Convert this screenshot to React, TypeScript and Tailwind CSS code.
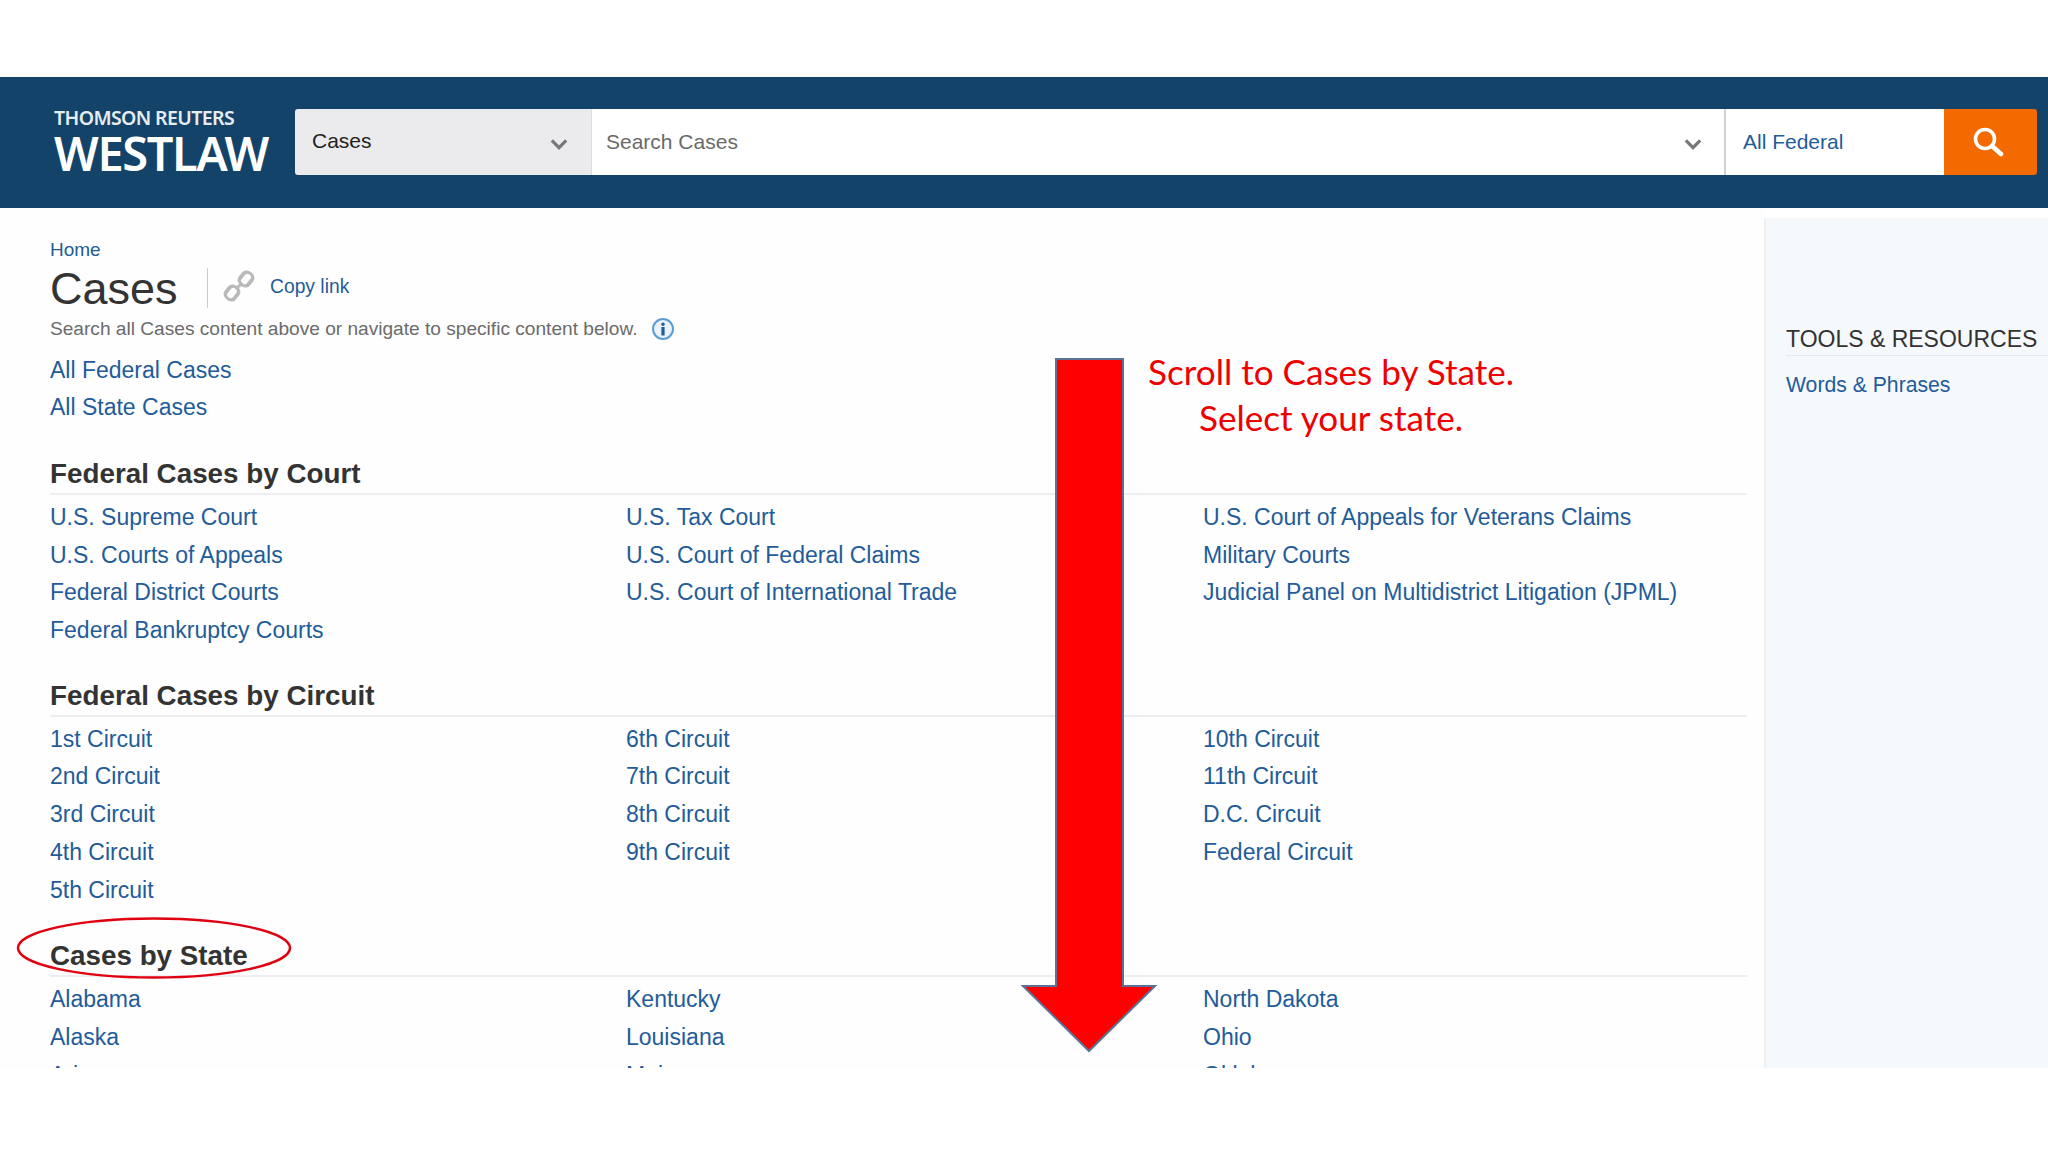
const courtRows = [
  ["U.S. Supreme Court", "U.S. Tax Court", "U.S. Court of Appeals for Veterans Claims"],
  ["U.S. Courts of Appeals", "U.S. Court of Federal Claims", "Military Courts"],
  ["Federal District Courts", "U.S. Court of International Trade", "Judicial Panel on Multidistrict Litigation (JPML)"],
  ["Federal Bankruptcy Courts", "", ""],
];

const circuitRows = [
  ["1st Circuit", "6th Circuit", "10th Circuit"],
  ["2nd Circuit", "7th Circuit", "11th Circuit"],
  ["3rd Circuit", "8th Circuit", "D.C. Circuit"],
  ["4th Circuit", "9th Circuit", "Federal Circuit"],
  ["5th Circuit", "", ""],
];

const stateRows = [
  ["Alabama", "Kentucky", "North Dakota"],
  ["Alaska", "Louisiana", "Ohio"],
  ["Arizona", "Maine", "Oklahoma"],
];

function Section({ title, rows }: { title: string; rows: string[][] }) {
  return (
    <section className="mr-[17px]">
      <h2 className="h-[38px] text-[27.8px] leading-[38px] font-bold text-[#333333]">{title}</h2>
      <div className="h-0.5 bg-[#eeeef0] mb-[3px]" />
      {rows.map((row, i) => (
        <div key={i} className="grid grid-cols-[576px_577px_1fr] h-[37.7px] items-center text-[23px] leading-[38px] text-[#1f5c99] whitespace-nowrap">
          {row.map((cell, j) => (
            <a key={j}>{cell}</a>
          ))}
        </div>
      ))}
    </section>
  );
}

function Chevron({ className }: { className: string }) {
  return (
    <svg viewBox="0 0 20 12" className={className} fill="none" stroke="#77787b" strokeWidth="3.6">
      <path d="M2 2l8 8 8-8" />
    </svg>
  );
}

export default function App() {
  return (
    <div className="relative h-[1152px] w-[2048px] overflow-hidden bg-white font-['Liberation_Sans',Arial,sans-serif]">
      <div className="h-[77px]" />

      {/* HEADER */}
      <header className="h-[131px] bg-[#134369] flex items-center pl-[54px] pr-[11px] pb-px">
        <div className="w-[241px] -mt-[2px] text-white font-['Noto_Sans',sans-serif] font-semibold">
          <div className="text-[19.5px] leading-[22px] tracking-[-0.6px] opacity-90">THOMSON REUTERS</div>
          <div className="text-[47px] leading-[46px] tracking-[-1.4px] mt-px">WESTLAW</div>
        </div>
        <div className="flex-1 h-[66px] flex rounded-[3px] overflow-hidden">
          <div className="w-[296px] bg-[#ebebed] flex items-center justify-between pl-[17px] pr-[23px] text-[21px] text-[#222222]">
            <span className="-mt-[3px]">Cases</span>
            <Chevron className="w-[18px] h-[12px] mt-[3px]" />
          </div>
          <div className="flex-1 bg-white border-l border-[#dddddd] flex items-center justify-between pl-[14px] pr-[22px] text-[21px] text-[#6a6a6a]">
            <span>Search Cases</span>
            <Chevron className="w-[18px] h-[12px] mt-[3px]" />
          </div>
          <div className="w-[220px] bg-white border-l-2 border-[#cfd3d6] flex items-center pl-[17px] text-[21px] text-[#1f5c99]">
            All Federal
          </div>
          <div className="w-[93px] bg-[#f26a00] flex items-center justify-center">
            <svg viewBox="0 0 32 32" className="w-[32px] h-[32px] -ml-[6px]" fill="none" stroke="#ffffff">
              <circle cx="13" cy="13" r="9.5" strokeWidth="3.6" />
              <path d="M20 20l9 8" strokeWidth="4.6" strokeLinecap="round" />
            </svg>
          </div>
        </div>
      </header>

      {/* BODY */}
      <div className="h-[860px] flex overflow-hidden">
        <main className="w-[1764px] pl-[50px] bg-[#fefefe]">
          <div className="text-[19px] leading-[24px] text-[#1f5c99] mt-[30px]">Home</div>
          <div className="flex items-center h-[52px] mt-px">
            <h1 className="w-[157px] text-[45px] leading-[52px] text-[#333333]">Cases</h1>
            <div className="w-px h-[40px] bg-[#cccccc] -mt-[3px]" />
            <svg viewBox="0 0 34 34" className="w-[34px] h-[34px] ml-[14px] -mt-[6px]" fill="none" stroke="#b9b9b9" strokeWidth="3">
              <rect x="-7" y="-4" width="14" height="8" rx="4" transform="translate(24 10) rotate(-50) scale(1 1.3)" />
              <rect x="-7" y="-4" width="14" height="8" rx="4" transform="translate(10 24) rotate(-50) scale(1 1.3)" />
              <path d="M14 20l6-6" />
            </svg>
            <a className="ml-[14px] text-[19.3px] text-[#1f5c99] -mt-[3px]">Copy link</a>
          </div>
          <div className="flex items-center h-[24px] mt-[2px] text-[19.13px] text-[#6b6b6b]">
            <span>Search all Cases content above or navigate to specific content below.</span>
            <svg viewBox="0 0 24 24" className="w-[24px] h-[24px] ml-[14px]">
              <circle cx="12" cy="12" r="10" fill="#eaf3fb" stroke="#5b9bd5" strokeWidth="2" />
              <circle cx="12" cy="7.2" r="1.7" fill="#1f5c99" />
              <rect x="10.4" y="10" width="3.2" height="8.5" fill="#1f5c99" />
            </svg>
          </div>
          <div className="mt-[11px] h-[37px] text-[23px] leading-[37px] text-[#1f5c99]">All Federal Cases</div>
          <div className="h-[37px] text-[23px] leading-[37px] text-[#1f5c99]">All State Cases</div>

          <div className="mt-[29px]"><Section title="Federal Cases by Court" rows={courtRows} /></div>
          <div className="mt-[28px]"><Section title="Federal Cases by Circuit" rows={circuitRows} /></div>
          <div className="mt-[29px]"><Section title="Cases by State" rows={stateRows} /></div>
        </main>

        <aside className="flex-1 mt-[10px] bg-[#f6f9fb] border-l-2 border-[#eef0f2] pl-[20px] overflow-hidden">
          <h3 className="mt-[106px] text-[23px] leading-[30px] text-[#333333] whitespace-nowrap">TOOLS &amp; RESOURCES</h3>
          <div className="h-px bg-[#e6e8ea] mt-[1px]" />
          <a className="block mt-[14px] text-[21.2px] leading-[30px] text-[#1f5c99]">Words &amp; Phrases</a>
        </aside>
      </div>

      {/* ANOTASI MERAH */}
      <div className="absolute left-[1101px] top-[348px] w-[460px] text-center font-['Lato',sans-serif] text-[35.1px] leading-[46px] text-[#ee0000]">
        <div>Scroll to Cases by State.</div>
        <div>Select your state.</div>
      </div>
      <svg className="absolute left-0 top-0 pointer-events-none" width="2048" height="1152">
        <path d="M1056 359H1123V986H1155L1089 1051L1023 986H1056Z" fill="#ff0000" stroke="#5b7294" strokeWidth="2" />
        <ellipse cx="154" cy="948" rx="136" ry="29.5" fill="none" stroke="#e0000f" strokeWidth="2.5" />
      </svg>
    </div>
  );
}
